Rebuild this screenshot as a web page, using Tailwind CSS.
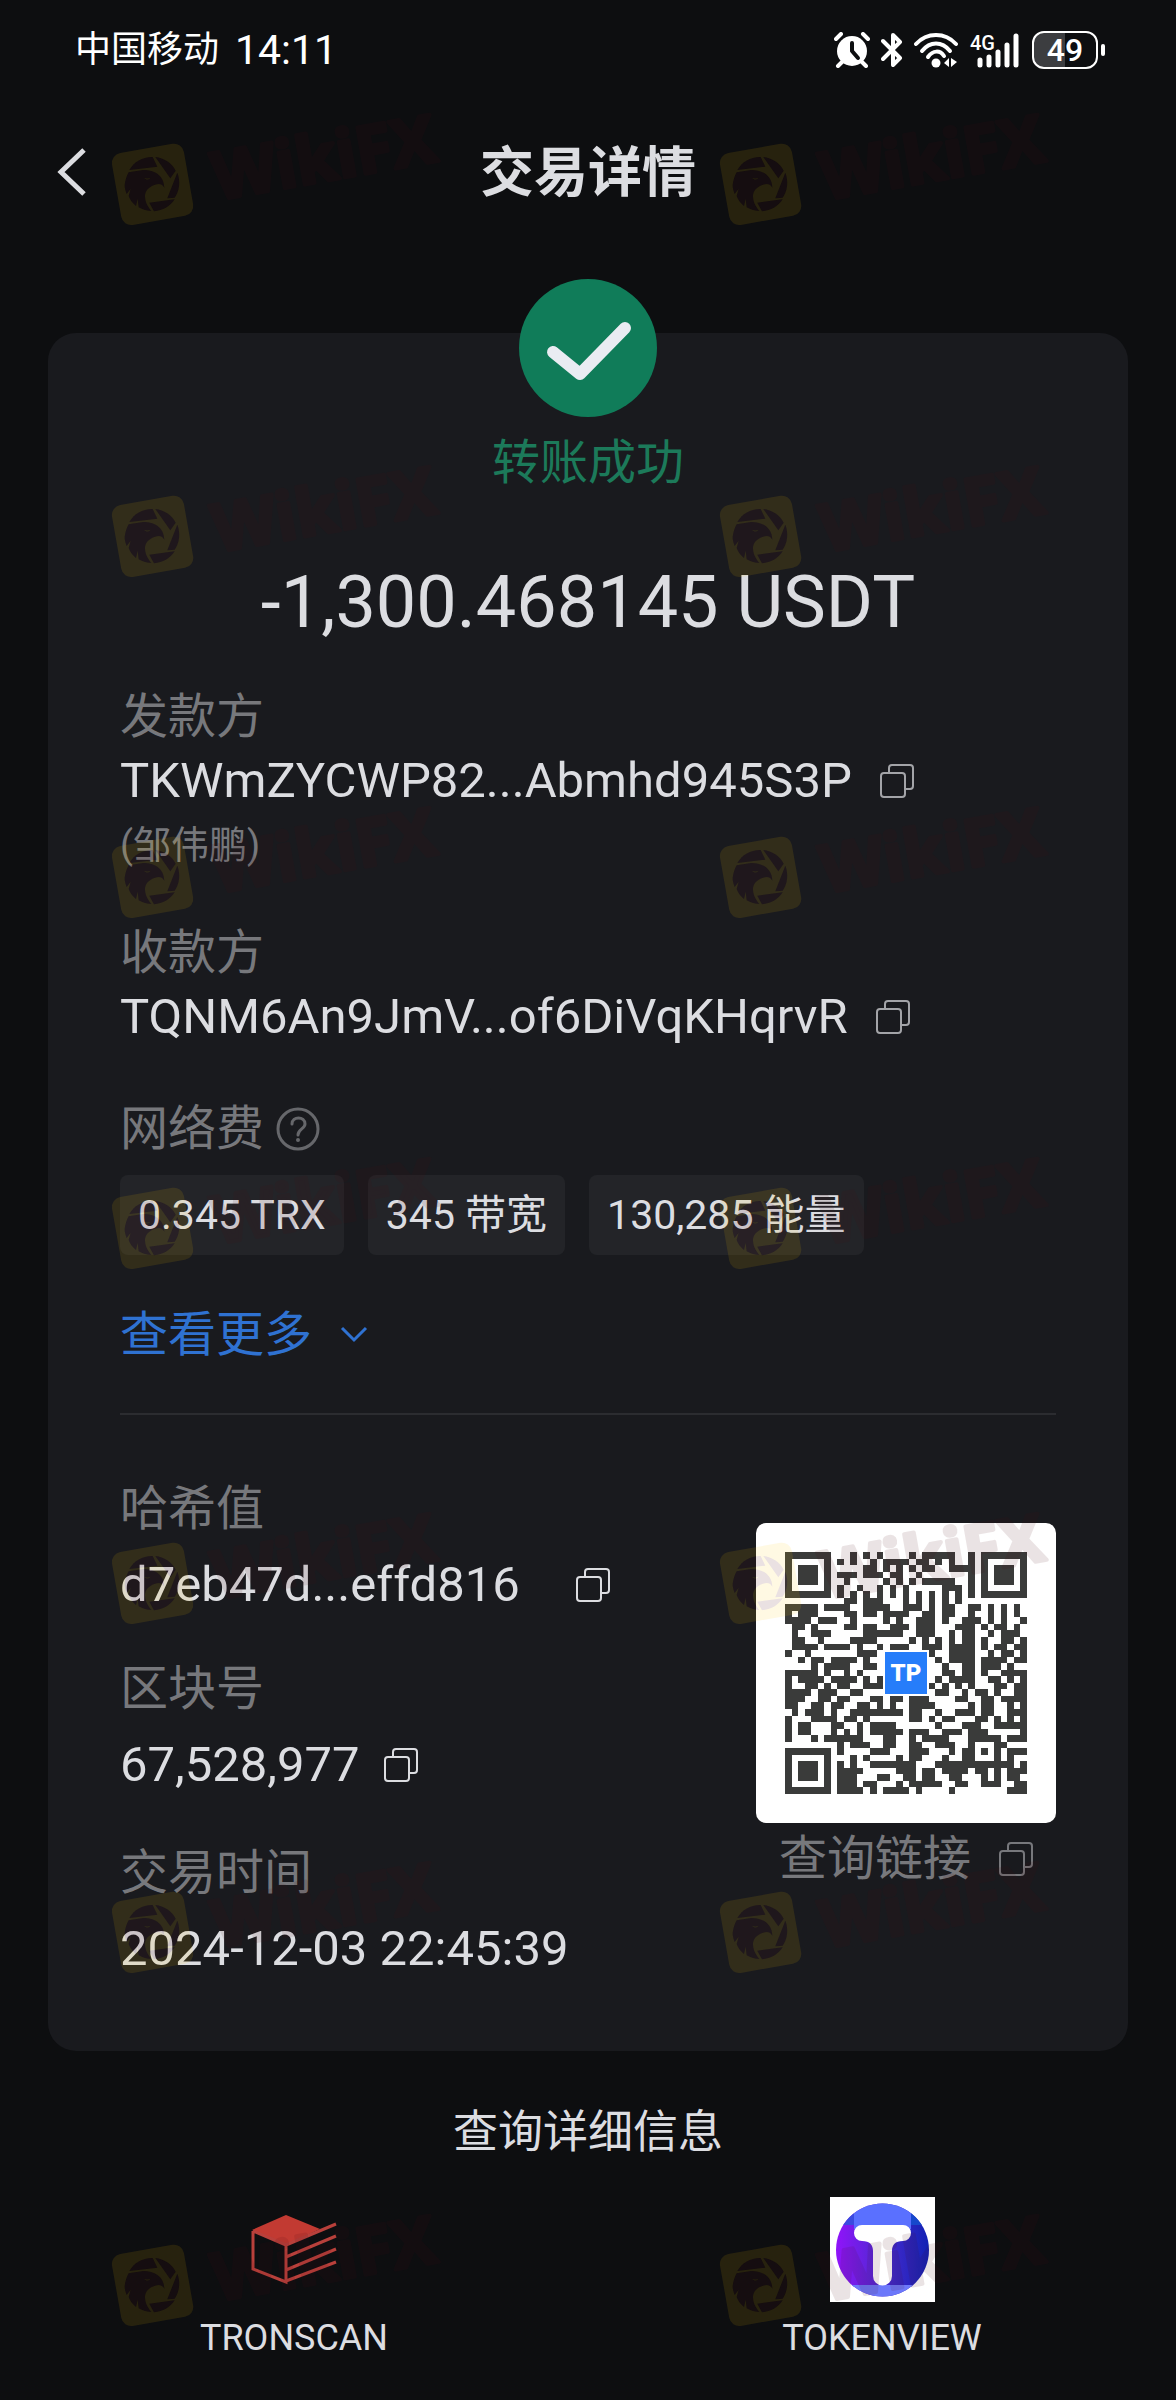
<!DOCTYPE html>
<html lang="zh-CN">
<head>
  <meta charset="UTF-8" />
  <meta name="viewport" content="width=device-width, initial-scale=1.0"/>
  <title>交易详情</title>
  <script src="https://cdn.jsdelivr.net/npm/@tailwindcss/browser@4"></script>
</head>
<body class="relative min-h-screen overflow-x-hidden bg-[#0d0e10] font-[Roboto,'Noto_Sans_CJK_SC',sans-serif] text-[#dcdde1]">

  <!-- Shared icons -->
  <svg class="absolute size-0" aria-hidden="true">
    <symbol id="copy" viewBox="0 0 34 34">
      <g fill="none" stroke="currentColor" stroke-width="2">
        <rect x="1" y="9" width="24" height="24" rx="3"/>
        <path d="M9 9V4a3 3 0 0 1 3-3h18a3 3 0 0 1 3 3v18a3 3 0 0 1-3 3h-5"/>
      </g>
    </symbol>
    <g id="eagle" transform="scale(.3333)">
      <path d="M118 150C132 125 160 110 188 111L202 140Z"/>
      <path d="M196 111C222 114 244 128 257 152L241 175Z"/>
      <path d="M262 158C272 185 268 212 254 233L232 235Z"/>
      <path d="M178 248L254 238C240 260 218 272 192 274Z"/>
      <path fill-rule="evenodd" d="M104 195C106 180 110 168 116 157L160 150C192 150 222 165 223 203C216 190 206 190 195 194C178 199 165 212 165 228C165 245 172 258 184 273C168 272 156 268 146 262L143 236L138 258C128 250 120 240 116 228L122 206L110 222C106 212 104 204 104 195ZM162 173C168 180 176 180 182 173C176 176 168 176 162 173Z"/>
    </g>
    <mask id="badge" maskUnits="userSpaceOnUse" x="0" y="0" width="120" height="120">
      <rect width="120" height="120" fill="#fff"/>
      <use href="#eagle" fill="#000"/>
    </mask>
    <symbol id="wikifx" viewBox="0 0 360 120" overflow="visible">
      <g mask="url(#badge)">
        <rect x="26" y="28" width="73" height="73" rx="10" fill="#ffc800" fill-opacity=".11" transform="rotate(-10 62 64)"/>
      </g>
      <use href="#eagle" fill="#500a12" fill-opacity=".12"/>
      <g opacity=".11">
        <text x="127" y="80" transform="rotate(-10 127 80)" font-family="Open Sans, sans-serif" font-weight="700" font-size="66" fill="#4a0a12" stroke="#4a0a12" stroke-width="4" stroke-linejoin="round">WikiFX</text>
      </g>
    </symbol>
  </svg>

  <!-- Status bar -->
  <div class="flex h-[100px] items-center justify-between pr-[71px] pl-[75px] text-white">
    <div class="flex items-center gap-4 leading-[60px]">
      <span class="text-[36px]">中国移动</span>
      <span class="text-[41px]">14:11</span>
    </div>
    <div class="flex items-center gap-[11px]">
      <svg class="h-[36px] w-[36px]" viewBox="0 0 36 36">
        <circle cx="18" cy="19" r="15" fill="#fff"/>
        <path d="M2 7l5-5M34 7l-5-5M8 30l-4 4M28 30l4 4" stroke="#fff" stroke-width="4" stroke-linecap="round"/>
        <path d="M18 11v8l6 7" fill="none" stroke="#0d0e10" stroke-width="4" stroke-linecap="round" stroke-linejoin="round"/>
      </svg>
      <svg class="h-[36px] w-[22px]" viewBox="0 0 22 36">
        <path d="M2 9l17 17-7 7V3l7 7L2 27" fill="none" stroke="#fff" stroke-width="4" stroke-linecap="round" stroke-linejoin="round"/>
      </svg>
      <svg class="h-[36px] w-[44px]" viewBox="0 0 44 36">
        <g fill="none" stroke="#fff" stroke-width="4" stroke-linecap="round">
          <path d="M2 12C13 0 31 0 42 12"/>
          <path d="M8 19C16 9 28 9 36 19"/>
          <path d="M14 25C19 18 26 18 30 24"/>
        </g>
        <circle cx="22" cy="31" r="4.5" fill="#fff"/>
        <path d="M30 31l5-5v9M37 26v9l6-5" fill="#fff"/>
      </svg>
      <svg class="h-[36px] w-[52px]" viewBox="0 0 52 36">
        <text x="1" y="18" font-family="Roboto" font-size="20" font-weight="500" fill="#fff">4G</text>
        <path d="M11 28v5M20 25v8M29 20v13M38 13v20M47 4v29" stroke="#fff" stroke-width="5" stroke-linecap="round"/>
      </svg>
      <div class="flex items-center gap-[3px]">
        <div class="flex h-[38px] w-[66px] items-center justify-center rounded-xl border-2 border-white bg-linear-to-r from-[#3c3d40] from-50% to-[#0d0e10] to-50% text-[32px] leading-none font-medium">49</div>
        <div class="h-3 w-1 rounded bg-white"></div>
      </div>
    </div>
  </div>

  <!-- Title bar -->
  <header class="grid h-[144px] grid-cols-[1fr_auto_1fr] items-center px-14">
    <button type="button" aria-label="返回" class="w-8">
      <svg class="h-[52px] w-8" viewBox="0 0 32 52"><path d="M28 4L5 26l23 22" fill="none" stroke="#dcdde1" stroke-width="5"/></svg>
    </button>
    <h1 class="pt-1 text-[54px] leading-[72px] font-bold">交易详情</h1>
  </header>

  <!-- Transfer card -->
  <main class="mx-12 mt-[89px] rounded-[28px] bg-[#191a1e] px-[72px] pb-[72px]">
    <div class="flex flex-col items-center">
      <svg class="-mt-[54px] h-[138px] w-[138px]" viewBox="0 0 138 138">
        <circle cx="69" cy="69" r="69" fill="#107c59"/>
        <path d="M34 73L61 95L106 49" fill="none" stroke="#e9ecf2" stroke-width="12" stroke-linecap="round" stroke-linejoin="round"/>
      </svg>
      <p class="mt-4 text-[48px] leading-[60px] text-[#1c7a5a]">转账成功</p>
      <p class="mt-[66px] text-[72px] leading-[88px] whitespace-nowrap">-1,300.468145 USDT</p>
    </div>

    <section class="mt-10">
      <h2 class="text-[48px] leading-[60px] text-[#77787c]">发款方</h2>
      <div class="mt-[2px] flex items-center gap-7">
        <span class="text-[49px] leading-[64px]">TKWmZYCWP82...Abmhd945S3P</span>
        <button type="button" aria-label="复制发款方" class="text-[#a3a4a8]"><svg class="size-[34px]"><use href="#copy"/></svg></button>
      </div>
      <p class="mt-[2px] text-[38px] leading-[60px] text-[#77787c]">(邹伟鹏)</p>
    </section>

    <section class="mt-12">
      <h2 class="text-[48px] leading-[60px] text-[#77787c]">收款方</h2>
      <div class="mt-[2px] flex items-center gap-7">
        <span class="text-[49px] leading-[64px]">TQNM6An9JmV...of6DiVqKHqrvR</span>
        <button type="button" aria-label="复制收款方" class="text-[#a3a4a8]"><svg class="size-[34px]"><use href="#copy"/></svg></button>
      </div>
    </section>

    <section class="mt-[50px]">
      <div class="flex items-center gap-3">
        <h2 class="text-[48px] leading-[60px] text-[#77787c]">网络费</h2>
        <button type="button" aria-label="网络费说明">
          <svg class="size-[44px]" viewBox="0 0 44 44" fill="none" stroke="#66676b" stroke-width="3">
            <circle cx="22" cy="22" r="20"/>
            <path d="M16 17c0-8 13-8 13 0 0 5-7 5-7 11" stroke-linecap="round"/>
            <circle cx="22" cy="33" r="1" stroke-width="2"/>
          </svg>
        </button>
      </div>
      <div class="mt-4 flex gap-6 text-[41px] leading-[80px]">
        <span class="rounded-lg bg-[#232428] px-[18px]">0.345 TRX</span>
        <span class="rounded-lg bg-[#232428] px-[18px]">345 带宽</span>
        <span class="rounded-lg bg-[#232428] px-[18px]">130,285 能量</span>
      </div>
      <button type="button" class="mt-[50px] flex items-center gap-7 text-[48px] leading-[60px] text-[#2f72d2]">
        查看更多
        <svg class="h-5 w-7" viewBox="0 0 28 20"><path d="M2 3l12 12L26 3" fill="none" stroke="currentColor" stroke-width="3"/></svg>
      </button>
    </section>

    <hr class="mt-12 border-t-2 border-[#2b2c30]">

    <div class="mt-16 flex justify-between">
      <dl class="text-[48px] leading-[60px]">
        <dt class="text-[#77787c]">哈希值</dt>
        <dd class="mt-4 flex items-center gap-14 text-[49px]">d7eb47d...effd816
          <button type="button" aria-label="复制哈希值"><svg class="size-[34px]"><use href="#copy"/></svg></button>
        </dd>
        <dt class="mt-11 text-[#77787c]">区块号</dt>
        <dd class="mt-4 flex items-center gap-6 text-[49px]">67,528,977
          <button type="button" aria-label="复制区块号"><svg class="size-[34px]"><use href="#copy"/></svg></button>
        </dd>
        <dt class="mt-12 text-[#77787c]">交易时间</dt>
        <dd class="mt-4 text-[49px]">2024-12-03 22:45:39</dd>
      </dl>
      <div class="mt-11 flex flex-col items-center">
        <div class="relative size-[300px] rounded-[10px] bg-white p-[29px]">
          <svg id="qr" class="size-full" viewBox="0 0 37 37" shape-rendering="crispEdges" role="img" aria-label="查询链接二维码"></svg>
          <div class="absolute top-1/2 left-1/2 size-[46px] -translate-1/2 border-2 border-white bg-[#267dfa] text-center text-[24px] leading-[42px] font-black text-white">TP</div>
        </div>
        <div class="mt-[6px] flex items-center gap-7 text-[48px] leading-[60px] text-[#77787c]">
          查询链接
          <button type="button" aria-label="复制查询链接"><svg class="size-[34px]"><use href="#copy"/></svg></button>
        </div>
      </div>
    </div>
  </main>

  <!-- Explorers -->
  <footer class="mt-[52px] text-center">
    <h2 class="text-[45px] leading-[60px]">查询详细信息</h2>
    <div class="mt-[34px] grid grid-cols-2 text-[36px] leading-[44px]">
      <a href="#tronscan" class="flex flex-col items-center gap-[14px]">
        <svg class="size-[105px]" viewBox="0 0 105 105">
          <path d="M10 33L44 18L78 32L44 48Z" fill="#c23a32"/>
          <path d="M44 48L94 27M11 34L11 72L44 85V48M44 60L94 39M44 73L94 52M44 84L94 65M11 34L44 48" fill="none" stroke="#b8403b" stroke-width="3"/>
        </svg>
        TRONSCAN
      </a>
      <a href="#tokenview" class="flex flex-col items-center gap-[14px]">
        <svg class="size-[105px]" viewBox="0 0 105 105">
          <defs>
            <linearGradient id="tv"><stop offset="0" stop-color="#9a10ff"/><stop offset=".5" stop-color="#4b2bd0"/><stop offset="1" stop-color="#0a20b0"/></linearGradient>
            <clipPath id="tvc"><circle cx="52.5" cy="53" r="46.5"/></clipPath>
          </defs>
          <rect width="105" height="105" fill="#fff"/>
          <g clip-path="url(#tvc)">
            <rect width="105" height="105" fill="url(#tv)"/>
            <rect width="24" height="28" fill="#3a4be0"/>
            <rect x="24" width="57" height="32" fill="#5a70ff"/>
            <rect x="81" width="24" height="28" fill="#1648cc"/>
            <rect y="88" width="105" height="17" fill="#6c78fa"/>
          </g>
          <path d="M32 28H73A8 8 0 0 1 73 44C65 44 62 48 62 54V79A9 9 0 0 1 43 79V54C43 48 40 44 32 44A8 8 0 0 1 32 28Z" fill="#fff"/>
        </svg>
        TOKENVIEW
      </a>
    </div>
  </footer>

  <!-- Watermark -->
  <div id="watermark" class="pointer-events-none absolute inset-0 grid grid-rows-[352px_341px_351px_355px_349px_353px_120px] overflow-hidden pt-[120px] pl-[90px]" aria-hidden="true"></div>

  <script>
    const modules = [
      '#######...#.#.#....#.#####..#.#######',
      '#.....#.#.#..#.####.##.#.#..#.#.....#',
      '#.###.#.....##.#.#.#.##..####.#.###.#',
      '#.###.#.###.###.##..#.......#.#.###.#',
      '#.###.#..#.....#.#.#.#####..#.#.###.#',
      '#.....#.#..#..#.#.#.....###.#.#.....#',
      '#######.#.#.#.#.#.#.#.#.#.#.#.#######',
      '.........##.###...#.#.#.#.#..........',
      '#####.####..####..###.#.##..##.#.#.#.',
      '#.###....##.##.####..##.##..#..#.#.#.',
      '####.###..#....#.#..###.#..###.#.#..#',
      '.##.#....##.##..###.###...###.#.##.#.',
      '.#..###.....######..###..#.##..#.###.',
      '.##..#....####.....#.#.#.#.##.#..##.#',
      '.####.####.#..#.###..###.####.#.##.##',
      '#..#.......###..##...##..####..#.##.#',
      '..#.##.####.#..........#.####.####.##',
      '....#.####..##..........#..##.###.#..',
      '#####.#..#.#............##.##.#..####',
      '#.####.####.#.#........#.####..##.#.#',
      '#..##.#.##..###.......#.#.#.#...##.##',
      '####.###..##...........##..#.##.#..##',
      '###..##.##...##.##.###....##..##.####',
      '##..##.##..##.#.#..####.....#.##..#.#',
      '.#.###.#..########.##..#..###.##..###',
      '#...####.##.#......##.#.##...##.#.#.#',
      '#.##...##..#.####......#...###..#####',
      '#.##...#.#.#.#####.###..###.###.....#',
      '#...#.######...##..#.####...#####.###',
      '........#.###..##..##..###..#...##...',
      '#######.#....###...###...#.##.#.#.###',
      '#.....#...#.#....#.##...#..##...#.#..',
      '#.###.#.#.#..#######...############.#',
      '#.###.#.####.....###.##.####.##.#.###',
      '#.###.#.###...##..##.##..##...#.#.##.',
      '#.....#.###.##...#.#####..##..###..##',
      '#######.####.#.####.#....#........###'
    ];
    let d = '';
    modules.forEach((row, y) => {
      [...row].forEach((cell, x) => {
        if (cell === '#') d += `M${x} ${y}h1v1h-1z`;
      });
    });
    document.getElementById('qr').innerHTML = `<path fill="#3a3b3a" d="${d}"/>`;

    const mark = '<svg class="h-[120px] w-[360px] shrink-0 overflow-visible"><use href="#wikifx"/></svg>';
    document.getElementById('watermark').innerHTML = `<div class="flex gap-[248px]">${mark}${mark}</div>`.repeat(7);
  </script>
</body>
</html>
